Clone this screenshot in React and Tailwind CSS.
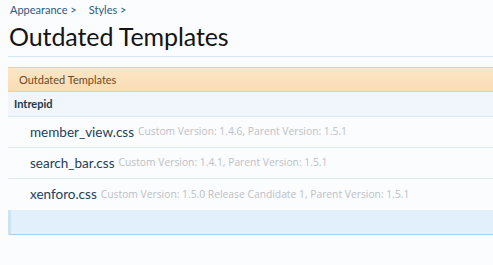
const items = [
  { name: 'member_view.css', info: 'Custom Version: 1.4.6, Parent Version: 1.5.1' },
  { name: 'search_bar.css', info: 'Custom Version: 1.4.1, Parent Version: 1.5.1' },
  { name: 'xenforo.css', info: 'Custom Version: 1.5.0 Release Candidate 1, Parent Version: 1.5.1' },
]

export default function App() {
  return (
    <div className="min-h-[265px] w-[493px] overflow-hidden bg-[#fbfcfe] pl-2 font-['Lato',sans-serif]">
      <div className="flex h-[18px] items-center gap-[12px] pl-[2px] pt-[2px] text-[11px] text-[#2b5a80]">
        <span>Appearance &gt;</span>
        <span>Styles &gt;</span>
      </div>
      <h1 className="h-[38px] whitespace-nowrap pl-[1px] pt-[1px] text-[25px] leading-[34px] tracking-[-0.1px] text-[#141414]">
        Outdated Templates
      </h1>
      <div className="h-px bg-[#d7e7f1]" />
      <div className="mt-[10px] border-y border-[#f1cf9c] bg-gradient-to-b from-[#fde6c6] to-[#f8dcb4] pl-[11px] text-[11px] leading-[23px] text-[#6b4a22]">
        Outdated Templates
      </div>
      <div className="border-b border-[#dbe9f3] bg-[#f0f6fb] pl-[6px] text-[11px] font-bold leading-[24px] text-[#20384d]">
        Intrepid
      </div>
      {items.map((it, i) => (
        <div
          key={it.name}
          className={`flex h-[31px] items-center whitespace-nowrap pl-[22px] ${i < items.length - 1 ? 'border-b border-[#dfeaf2]' : ''}`}
        >
          <span className="text-[13.5px] text-[#22405c]">{it.name}</span>
          <span className="ml-[4px] font-['Open_Sans',sans-serif] text-[10.3px] text-[#bcc0c5]">{it.info}</span>
        </div>
      ))}
      <div className="h-[25px] border-b border-[#a9cfeb] border-l-[3px] border-l-[#cfe2f1] bg-[#e1f0fb]" />
    </div>
  )
}
